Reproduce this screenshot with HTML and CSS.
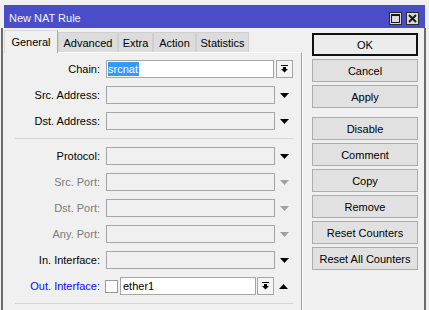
FILE: index.html
```html
<!DOCTYPE html>
<html lang="en">

<head>
    <meta charset="UTF-8" />
    <title>New NAT Rule</title>
    <link rel="stylesheet" href="styles.css">
</head>

<body>
    <div class="window">
        <div class="titlebar">
            <span class="title">New NAT Rule</span>
            <div class="win-btns">
                <span class="win-btn">
                    <svg width="11" height="11" viewBox="0 0 11 11">
                        <rect x="1.5" y="1.5" width="8" height="8" fill="none" stroke="#1a1a1a" stroke-width="1" />
                        <rect x="1" y="1" width="9" height="2" fill="#1a1a1a" />
                    </svg>
                </span>
                <span class="win-btn">
                    <svg width="11" height="11" viewBox="0 0 11 11">
                        <path d="M2 2 L9 9 M9 2 L2 9" stroke="#1a1a1a" stroke-width="2" />
                    </svg>
                </span>
            </div>
        </div>

        <div class="frame">
            <div class="main">
                <div class="tabs">
                    <div class="tab tab-active tab-general">General</div>
                    <div class="tab tab-advanced">Advanced</div>
                    <div class="tab tab-extra">Extra</div>
                    <div class="tab tab-action">Action</div>
                    <div class="tab tab-statistics">Statistics</div>
                </div>

                <div class="panel">
                    <div class="row">
                        <label class="lbl">Chain:</label>
                        <div class="field field-white field-chain"><span class="selected">srcnat</span></div>
                        <span class="dd-btn">
                            <svg width="7" height="8" viewBox="0 0 7 8">
                                <rect x="0" y="0" width="7" height="1" fill="#000" />
                                <rect x="2" y="2" width="3" height="2" fill="#000" />
                                <polygon points="0,4 7,4 3.5,7.5" fill="#000" />
                            </svg>
                        </span>
                    </div>
                    <div class="row">
                        <label class="lbl">Src. Address:</label>
                        <div class="field"></div>
                        <span class="arrow"><svg width="9" height="5" viewBox="0 0 9 5"><polygon points="0,0 9,0 4.5,5" fill="#000" /></svg></span>
                    </div>
                    <div class="row">
                        <label class="lbl">Dst. Address:</label>
                        <div class="field"></div>
                        <span class="arrow"><svg width="9" height="5" viewBox="0 0 9 5"><polygon points="0,0 9,0 4.5,5" fill="#000" /></svg></span>
                    </div>

                    <div class="sep"></div>

                    <div class="row">
                        <label class="lbl">Protocol:</label>
                        <div class="field"></div>
                        <span class="arrow"><svg width="9" height="5" viewBox="0 0 9 5"><polygon points="0,0 9,0 4.5,5" fill="#000" /></svg></span>
                    </div>
                    <div class="row">
                        <label class="lbl lbl-disabled">Src. Port:</label>
                        <div class="field"></div>
                        <span class="arrow"><svg width="9" height="5" viewBox="0 0 9 5"><polygon points="0,0 9,0 4.5,5" fill="#a0a0a0" /></svg></span>
                    </div>
                    <div class="row">
                        <label class="lbl lbl-disabled">Dst. Port:</label>
                        <div class="field"></div>
                        <span class="arrow"><svg width="9" height="5" viewBox="0 0 9 5"><polygon points="0,0 9,0 4.5,5" fill="#a0a0a0" /></svg></span>
                    </div>
                    <div class="row">
                        <label class="lbl lbl-disabled">Any. Port:</label>
                        <div class="field"></div>
                        <span class="arrow"><svg width="9" height="5" viewBox="0 0 9 5"><polygon points="0,0 9,0 4.5,5" fill="#a0a0a0" /></svg></span>
                    </div>
                    <div class="row">
                        <label class="lbl">In. Interface:</label>
                        <div class="field"></div>
                        <span class="arrow"><svg width="9" height="5" viewBox="0 0 9 5"><polygon points="0,0 9,0 4.5,5" fill="#000" /></svg></span>
                    </div>
                    <div class="row">
                        <label class="lbl lbl-active">Out. Interface:</label>
                        <span class="check"></span>
                        <div class="field field-white field-out">ether1</div>
                        <span class="dd-btn">
                            <svg width="7" height="8" viewBox="0 0 7 8">
                                <rect x="0" y="0" width="7" height="1" fill="#000" />
                                <rect x="2" y="2" width="3" height="2" fill="#000" />
                                <polygon points="0,4 7,4 3.5,7.5" fill="#000" />
                            </svg>
                        </span>
                        <span class="arrow"><svg width="9" height="5" viewBox="0 0 9 5"><polygon points="0,5 9,5 4.5,0" fill="#000" /></svg></span>
                    </div>

                    <div class="sep"></div>
                </div>
            </div>

            <div class="actions">
                <button class="btn btn-default">OK</button>
                <button class="btn">Cancel</button>
                <button class="btn">Apply</button>
                <button class="btn btn-group">Disable</button>
                <button class="btn">Comment</button>
                <button class="btn">Copy</button>
                <button class="btn">Remove</button>
                <button class="btn">Reset Counters</button>
                <button class="btn">Reset All Counters</button>
            </div>
        </div>
    </div>
</body>

</html>
```

FILE: styles.css
```css
body {
    margin: 0;
    background-color: #f0f0f0;
    font-family: 'Liberation Sans', Arial, sans-serif;
    font-size: 11px;
    color: #000;
}

.window {
    width: 429px;
    height: 310px;
    padding-top: 5px;
    box-sizing: border-box;
    overflow: hidden;
}

/* title bar */

.titlebar {
    height: 23px;
    margin: 0 4px;
    padding: 2px 6px 0 5px;
    box-sizing: border-box;
    background-color: #4a4dc8;
    display: flex;
    align-items: center;
    justify-content: space-between;
}

.title {
    color: #f4f4ff;
    font-size: 11px;
}

.win-btns {
    display: flex;
    gap: 4px;
    margin-top: 2px;
}

.win-btn {
    width: 13px;
    height: 13px;
    box-sizing: border-box;
    border: 1px solid #2a2a2a;
    background-color: #d9d9d9;
    display: flex;
    align-items: center;
    justify-content: center;
}

/* window body */

.frame {
    display: flex;
    height: 282px;
    margin: 0 3px 0 1px;
    border-left: 2px solid #6b6b6b;
    border-right: 2px solid #6b6b6b;
}

.main {
    width: 298px;
    margin-left: 1px;
}

.tabs {
    display: flex;
    align-items: flex-end;
    height: 24px;
}

.tab {
    height: 20px;
    box-sizing: border-box;
    border: 1px solid #cfcfcf;
    border-bottom: none;
    background-color: #dcdcdc;
    display: flex;
    align-items: center;
    justify-content: center;
    padding-top: 1px;
}

.tab-active {
    height: 23px;
    background-color: #f0f0f0;
    border-color: #d8d8d8;
    border-right-color: #a9a9a9;
    margin-bottom: -1px;
    position: relative;
    padding-bottom: 2px;
}

.tab-general { width: 54px; }
.tab-advanced { width: 60px; }
.tab-extra { width: 35px; }
.tab-action { width: 43px; }
.tab-statistics { width: 53px; }

.panel {
    height: 258px;
    box-sizing: border-box;
    padding-top: 7px;
    border-top: 1px solid #ffffff;
    border-right: 1px solid #a0a0a0;
    box-shadow: 1px 0 0 #ffffff;
}

.row {
    display: flex;
    align-items: center;
    height: 18px;
    margin-bottom: 8px;
}

.lbl {
    width: 96px;
    margin-right: 6px;
    text-align: right;
    white-space: nowrap;
}

.lbl-disabled {
    color: #7a7a7a;
}

.lbl-active {
    margin-right: 5px;
    color: #0a0aff;
}

.field {
    width: 169px;
    height: 18px;
    box-sizing: border-box;
    border: 1px solid #a6a6a6;
    background-color: #f0f0f0;
    display: flex;
    align-items: center;
    padding-left: 1px;
}

.field-white {
    background-color: #ffffff;
}

.field-chain {
    width: 168px;
}

.field-out {
    width: 136px;
    padding-left: 2px;
}

.selected {
    background-color: #3399ff;
    color: #ffffff;
    line-height: 14px;
    padding-right: 1px;
}

.dd-btn {
    width: 17px;
    height: 18px;
    box-sizing: border-box;
    margin-left: 2px;
    border: 1px solid #a6a6a6;
    background-color: #f4f4f4;
    display: flex;
    align-items: center;
    justify-content: center;
}

.field-out + .dd-btn {
    margin-left: 1px;
}

.arrow {
    width: 18px;
    height: 18px;
    display: flex;
    align-items: center;
    justify-content: center;
}

.check {
    width: 13px;
    height: 13px;
    box-sizing: border-box;
    border: 1px solid #9a9a9a;
    background-color: #ffffff;
    margin-right: 2px;
}

.sep {
    height: 1px;
    margin: 1px 8px 8px 11px;
    background-color: #d5d5d5;
}

/* buttons column */

.actions {
    width: 106px;
    margin-left: 10px;
    padding-top: 5px;
    display: flex;
    flex-direction: column;
    gap: 3px;
}

.btn {
    width: 106px;
    height: 23px;
    padding: 0;
    box-sizing: border-box;
    background-color: #e1e1e1;
    border: 1px solid #adadad;
    font-family: inherit;
    font-size: 11px;
    color: #000;
    text-align: center;
}

.btn-default {
    border: 2px solid #111111;
    background-color: #ececec;
}

.btn-group {
    margin-top: 6px;
}
```
